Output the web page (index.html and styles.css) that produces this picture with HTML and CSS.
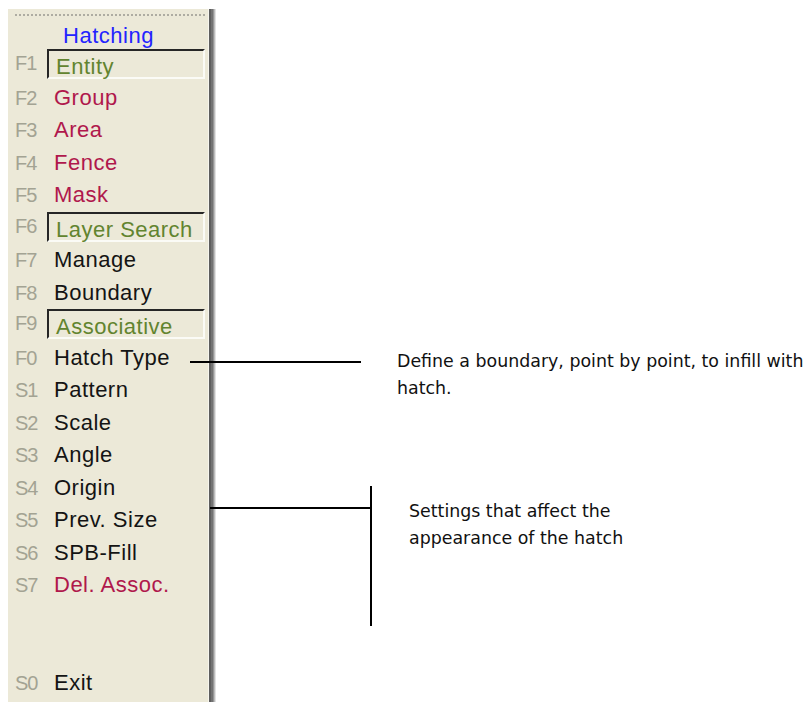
FILE: index.html
```html
<!DOCTYPE html>
<html lang="en">
<head>
  <meta charset="UTF-8">
  <title>Hatching</title>
  <link rel="stylesheet" href="styles.css">
</head>
<body>
  <div class="stage">
    <aside class="menu">
      <div class="grip"></div>
      <div class="title">Hatching</div>
      <ul class="keys">
        <li class="row on"><span class="key">F1</span><span class="lbl toggle">Entity</span></li>
        <li class="row"><span class="key">F2</span><span class="lbl red">Group</span></li>
        <li class="row"><span class="key">F3</span><span class="lbl red">Area</span></li>
        <li class="row"><span class="key">F4</span><span class="lbl red">Fence</span></li>
        <li class="row"><span class="key">F5</span><span class="lbl red">Mask</span></li>
        <li class="row on"><span class="key">F6</span><span class="lbl toggle">Layer Search</span></li>
        <li class="row"><span class="key">F7</span><span class="lbl">Manage</span></li>
        <li class="row"><span class="key">F8</span><span class="lbl">Boundary</span></li>
        <li class="row on"><span class="key">F9</span><span class="lbl toggle">Associative</span></li>
        <li class="row"><span class="key">F0</span><span class="lbl">Hatch Type</span></li>
        <li class="row"><span class="key">S1</span><span class="lbl">Pattern</span></li>
        <li class="row"><span class="key">S2</span><span class="lbl">Scale</span></li>
        <li class="row"><span class="key">S3</span><span class="lbl">Angle</span></li>
        <li class="row"><span class="key">S4</span><span class="lbl">Origin</span></li>
        <li class="row"><span class="key">S5</span><span class="lbl">Prev. Size</span></li>
        <li class="row"><span class="key">S6</span><span class="lbl">SPB-Fill</span></li>
        <li class="row"><span class="key">S7</span><span class="lbl red">Del. Assoc.</span></li>
        <li class="row"></li>
        <li class="row"></li>
        <li class="row"><span class="key">S0</span><span class="lbl">Exit</span></li>
      </ul>
    </aside>

    <!-- callout lines -->
    <svg class="leaders" width="806" height="702" viewBox="0 0 806 702">
      <line x1="190" y1="362" x2="361" y2="362" />
      <line x1="210" y1="508" x2="372" y2="508" />
      <line x1="371" y1="486" x2="371" y2="626" />
    </svg>

    <p class="note note-type">Define a boundary, point by point, to infill with<br>hatch.</p>
    <p class="note note-settings">Settings that affect the<br>appearance of the hatch</p>
  </div>
</body>
</html>
```

FILE: styles.css
```css
html, body { margin: 0; height: 100%; overflow: hidden; background: #fff; }
.stage { position: relative; display: flow-root; width: 806px; height: 702px; }

.menu { margin: 9px 0 0 8px; width: 203px; height: 693px; background: #ece9d8; padding: 5px 0 0 7px; box-sizing: border-box; border-right: 2px solid #5e5e5e; box-shadow: inset -1px 0 #f6f5ee, 2px 0 0 #737373, 3px 0 0 #959595, 4px 0 0 #bdbdbd, 5px 0 0 #e2e2e2; font-family: "Liberation Sans", Arial, sans-serif; }
.grip { height: 2px; margin-right: 4px; background: repeating-linear-gradient(to right, #aeaca2 0 2px, transparent 2px 4px); }
.title { height: 30px; margin-top: 3px; line-height: 34px; text-align: center; color: #2323ff; font-size: 22px; letter-spacing: 0.5px; padding-right: 7px; }

.keys { list-style: none; margin: 0; padding: 0; }
.row { display: flex; height: 32.5px; }
.key { width: 32px; line-height: 32px; font-size: 20px; letter-spacing: -1px; color: #a3a393; }
.row.on .key { margin-top: -2px; }
.lbl { flex: 1; margin-right: 4px; padding-left: 7px; line-height: 32px; font-size: 22px; letter-spacing: 0.5px; color: #141414; white-space: nowrap; }
.lbl.red { color: #b0184c; }
.lbl.toggle { align-self: flex-start; height: 30px; box-sizing: border-box; padding: 5px 0 0 7px; line-height: 21px; color: #62842f; border: 2px solid; border-color: #262626 #fbfbf6 #fbfbf6 #262626; }

.leaders { position: absolute; left: 0; top: 0; }
.leaders line { stroke: #000; stroke-width: 2; }

.note { position: absolute; margin: 0; font-family: "DejaVu Sans", sans-serif; font-size: 17.4px; line-height: 27px; color: #111; white-space: nowrap; }
.note-type { left: 397px; top: 348px; }
.note-settings { left: 409px; top: 498px; }
```
